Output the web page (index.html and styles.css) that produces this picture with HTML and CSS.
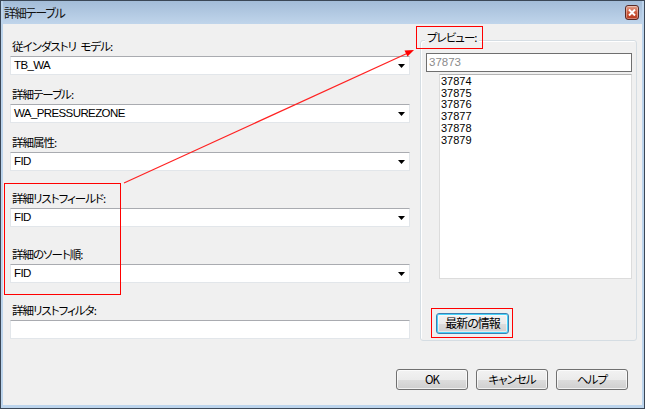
FILE: index.html
```html
<!DOCTYPE html>
<html lang="ja">
<head>
<meta charset="utf-8">
<title>詳細テーブル</title>
<link rel="stylesheet" href="styles.css">
</head>
<body>

<div class="window">
  <div class="titlebar">
    <span class="title">詳細テーブル</span>
    <span class="close">
      <svg width="8" height="7" viewBox="0 0 8 7"><path d="M1 0.5L7 6.5M7 0.5L1 6.5" stroke="#fff" stroke-width="2"/></svg>
    </span>
  </div>

  <div class="client">
    <div class="main">
      <div class="fields">
        <div class="field">
          <div class="label">従インダストリ モデル:</div>
          <div class="combo"><span class="value">TB_WA</span><svg class="arrow" width="7" height="4"><path d="M0 0h7l-3.5 4z"/></svg></div>
        </div>
        <div class="field">
          <div class="label">詳細テーブル:</div>
          <div class="combo"><span class="value">WA_PRESSUREZONE</span><svg class="arrow" width="7" height="4"><path d="M0 0h7l-3.5 4z"/></svg></div>
        </div>
        <div class="field">
          <div class="label">詳細属性:</div>
          <div class="combo"><span class="value">FID</span><svg class="arrow" width="7" height="4"><path d="M0 0h7l-3.5 4z"/></svg></div>
        </div>
        <div class="field wide">
          <div class="label">詳細リストフィールド:</div>
          <div class="combo"><span class="value">FID</span><svg class="arrow" width="7" height="4"><path d="M0 0h7l-3.5 4z"/></svg></div>
        </div>
        <div class="field wide">
          <div class="label">詳細のソート順:</div>
          <div class="combo"><span class="value">FID</span><svg class="arrow" width="7" height="4"><path d="M0 0h7l-3.5 4z"/></svg></div>
        </div>
        <div class="field wide">
          <div class="label">詳細リストフィルタ:</div>
          <div class="textbox"></div>
        </div>
      </div>

      <div class="group">
        <div class="group-title">プレビュー:</div>
        <div class="preview-input">37873</div>
        <div class="list">
          <div>37874</div>
          <div>37875</div>
          <div>37876</div>
          <div>37877</div>
          <div>37878</div>
          <div>37879</div>
        </div>
        <div class="refresh">最新の情報</div>
      </div>
    </div>

    <div class="buttons">
      <div class="btn">OK</div>
      <div class="btn">キャンセル</div>
      <div class="btn">ヘルプ</div>
    </div>
  </div>

  <!-- red markup drawn over the dialog -->
  <svg class="annotations" width="645" height="409">
    <rect x="4.5" y="183.5" width="116" height="111" fill="none" stroke="#f00"/>
    <rect x="416.5" y="26.5" width="66" height="22" fill="none" stroke="#f00"/>
    <rect x="431.5" y="308.5" width="81" height="29" fill="none" stroke="#f00"/>
    <line x1="124" y1="183" x2="408" y2="53" stroke="#f22" stroke-width="1.2"/>
    <path d="M414 50L404.5 50.5L407.5 56.5Z" fill="#f00"/>
  </svg>
</div>

</body>
</html>
```

FILE: styles.css
```css
body {
  margin: 0;
  background: #fff;
  font-family: "Noto Sans CJK JP", "Liberation Sans", sans-serif;
  font-size: 11.5px;
  letter-spacing: -1px;
  word-spacing: 3px;
  font-feature-settings: "palt";
  color: #000;
}

.window {
  position: relative;
  width: 645px;
  height: 409px;
  box-sizing: border-box;
  border: 1px solid #3b4756;
  padding: 0 2px 2px 2px;
  background: #bcd4ec;
}

.titlebar {
  height: 23px;
  display: flex;
  align-items: center;
  justify-content: space-between;
  background: linear-gradient(#a3bcd8, #c0d5eb);
}

.title {
  padding-left: 1px;
  font-size: 12px;
  letter-spacing: -1.2px;
  line-height: 16px;
  color: #111;
}

.close {
  width: 12px;
  height: 13px;
  margin-right: 3px;
  display: flex;
  align-items: center;
  justify-content: center;
  border: 1px solid #5a2a24;
  border-radius: 3px;
  background: linear-gradient(#e3a18c, #cc5a3c 50%, #b8381d);
  box-shadow: inset 0 0 0 1px rgba(255,255,255,.35);
}

.client {
  height: 381px;
  box-sizing: border-box;
  padding: 15px 5px 0 7px;
  background: #f0f0f0;
}

.main {
  display: flex;
  gap: 10px;
}

.fields {
  width: 400px;
}

.field + .field {
  margin-top: 12px;
}

.field.wide {
  margin-top: 20px;
}

.label {
  height: 14px;
  line-height: 14px;
  margin-bottom: 3px;
  padding-left: 2px;
  white-space: nowrap;
}

.combo,
.textbox {
  height: 19px;
  box-sizing: border-box;
  display: flex;
  align-items: center;
  justify-content: space-between;
  padding: 0 4px 0 3px;
  background: #fff;
  border: 1px solid #e2e6ea;
  border-top-color: #a9abb0;
}

.value {
  font-family: "Liberation Sans", sans-serif;
  font-size: 11.5px;
  letter-spacing: -0.6px;
  line-height: 17px;
}

.arrow {
  display: block;
  fill: #000;
}

.group {
  width: 217px;
  height: 301px;
  margin-top: 1px;
  box-sizing: border-box;
  display: flex;
  flex-direction: column;
  padding: 0 4px 0 5px;
  border: 1px solid #d5dde3;
  border-radius: 3px;
  box-shadow: inset 1px 1px 0 #fff;
}

.group-title {
  align-self: flex-start;
  height: 14px;
  line-height: 14px;
  margin: -11px 0 9px -1px;
  padding: 0 2px;
  background: #f0f0f0;
}

.preview-input {
  height: 19px;
  box-sizing: border-box;
  padding-left: 2px;
  border: 1px solid #6f6f6f;
  background: #fff;
  color: #8c8c8c;
  font-family: "Liberation Sans", sans-serif;
  letter-spacing: 0;
  font-size: 11.5px;
  line-height: 17px;
}

.list {
  height: 205px;
  box-sizing: border-box;
  margin: 2px 0 0 13px;
  padding: 1px 0 0 1px;
  background: #fff;
  border: 1px solid #dcdcdc;
  border-top-color: #b4b4b4;
  font-family: "Liberation Sans", sans-serif;
  letter-spacing: 0;
  font-size: 11px;
  line-height: 11.7px;
}

.refresh {
  align-self: flex-start;
  width: 73px;
  height: 21px;
  box-sizing: border-box;
  margin: 34px 0 0 10px;
  text-align: center;
  line-height: 18px;
  font-size: 12px;
  border: 1px solid #3c7fb1;
  border-radius: 3px;
  background: linear-gradient(#f2f2f2, #ebebeb 50%, #dddddd 51%, #cfcfcf);
  box-shadow: inset 0 0 0 1px #48d4fa, inset 0 0 0 2px rgba(255,255,255,.5);
}

.buttons {
  display: flex;
  justify-content: flex-end;
  gap: 8px;
  margin: 28px 9px 0 0;
}

.btn {
  width: 72px;
  height: 21px;
  box-sizing: border-box;
  text-align: center;
  line-height: 18px;
  border: 1px solid #707070;
  border-radius: 3px;
  background: linear-gradient(#f2f2f2, #ebebeb 50%, #dddddd 51%, #cfcfcf);
  box-shadow: inset 0 0 0 1px rgba(255,255,255,.7);
}

.annotations {
  position: absolute;
  top: -1px;
  left: -1px;
  pointer-events: none;
}
```
